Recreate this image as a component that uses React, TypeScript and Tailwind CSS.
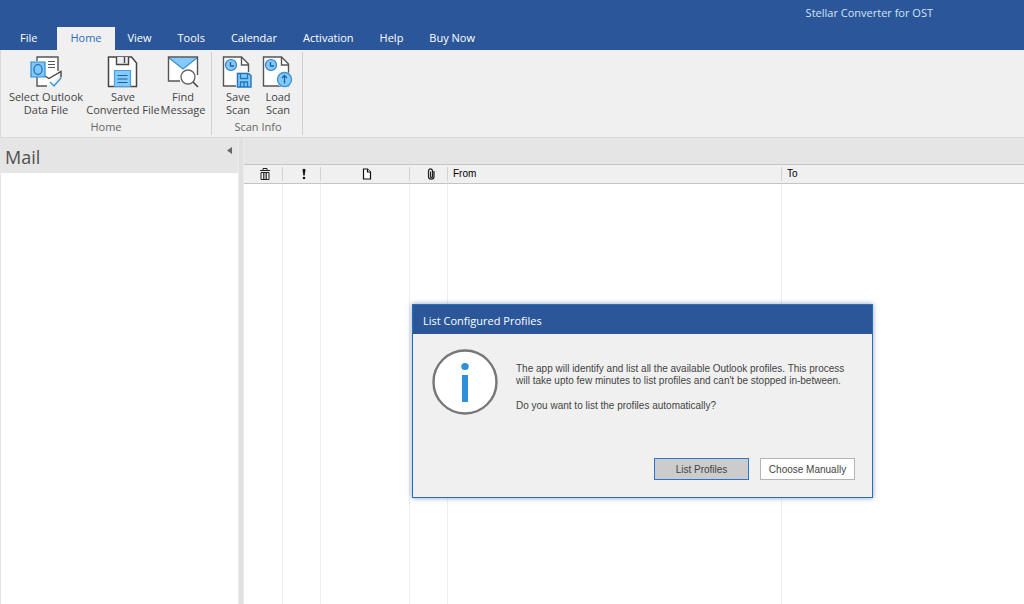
import type { ReactNode } from "react";
import clsx from "clsx";

const tabs = ["File", "Home", "View", "Tools", "Calendar", "Activation", "Help", "Buy Now"];

function ClockBadge() {
  return (
    <>
      <circle cx="9" cy="10" r="5.5" fill="#83caff" stroke="#2b7cc0" strokeWidth="1.2" />
      <path d="M8.5 7v4H12" fill="none" stroke="#1b639f" strokeWidth="1.3" />
    </>
  );
}

function PageOutline() {
  return (
    <>
      <path d="M1.5 2h18l7 7v22h-25z" fill="#fff" stroke="#555" strokeWidth="1.4" />
      <path d="M19.5 2v8h7" fill="none" stroke="#555" strokeWidth="1.4" />
    </>
  );
}

function OutlookFileIcon() {
  return (
    <svg className="h-[33px] w-8" viewBox="0 0 32 33" fill="none" aria-hidden="true">
      <path d="M7 2h21v19l-9 10H7z" fill="#fff" />
      <path d="M7 6V2h21v14M7 22v9h10" stroke="#555" strokeWidth="1.4" />
      <path d="M15 21l4 2.500 12-7v6" stroke="#444" strokeWidth="1.4" />
      <path d="M18 6.5h7M18 9.5h7M18 12.5h7" stroke="#555" strokeWidth="1.2" />
      <path d="M1 7h14v15H1z" fill="#83c8fa" stroke="#2d8bd0" strokeWidth="1.2" />
      <ellipse cx="8" cy="14.5" rx="4" ry="5" stroke="#2579bb" strokeWidth="1.3" />
      <path d="M20 27l4 4 7-8" stroke="#3d96dc" strokeWidth="1.5" />
    </svg>
  );
}

function FloppyIcon() {
  return (
    <svg className="h-[33px] w-8" viewBox="0 0 32 33" fill="none" aria-hidden="true">
      <path d="M1.5 2h23l5 6v23.5h-28z" fill="#fff" stroke="#444" strokeWidth="1.5" />
      <path d="M9.500 2v7.500h12V2" fill="#eee" stroke="#444" strokeWidth="1.4" />
      <path d="M17.500 2v6" stroke="#444" strokeWidth="1.4" />
      <path d="M7.500 31.500v-16h16v16z" fill="#83caff" stroke="#48a0e4" strokeWidth="1.2" />
      <path d="M10.500 20.500h10M10.500 24h10M10.500 27.500h10" stroke="#215f93" strokeWidth="1.2" />
    </svg>
  );
}

function FindIcon() {
  return (
    <svg className="h-[33px] w-8" viewBox="0 0 32 33" fill="none" aria-hidden="true">
      <path d="M1.500 2h29v24h-29z" fill="#fff" />
      <path d="M2 2.500h28L16 14z" fill="#83caff" />
      <path d="M1.500 2.500L16 14 30.500 2.500" stroke="#3f8dcb" strokeWidth="1.2" />
      <path d="M13 26H1.500V2h29v18" stroke="#555" strokeWidth="1.4" />
      <circle cx="21" cy="22" r="7" fill="#fff" stroke="#666" strokeWidth="1.4" />
      <path d="M26 27l5 5" stroke="#444" strokeWidth="1.6" />
    </svg>
  );
}

function SaveScanIcon() {
  return (
    <svg className="h-[33px] w-8" viewBox="0 0 32 33" fill="none" aria-hidden="true">
      <PageOutline />
      <ClockBadge />
      <path d="M14 17h15v16H14z" fill="#f0f0f0" />
      <path d="M15.500 18.500h11l2.500 2V32H15.500z" fill="#83caff" stroke="#2277b9" strokeWidth="1.4" />
      <path d="M18.500 18.500v5h7v-5M18.500 32v-5h7v5M22 27.500V32" stroke="#2277b9" strokeWidth="1.4" />
    </svg>
  );
}

function LoadScanIcon() {
  return (
    <svg className="h-[33px] w-8" viewBox="0 0 32 33" fill="none" aria-hidden="true">
      <PageOutline />
      <ClockBadge />
      <circle cx="22.500" cy="24.500" r="8" fill="#f0f0f0" />
      <circle cx="22.500" cy="24.500" r="7" fill="#83caff" stroke="#3c93d6" strokeWidth="1.4" />
      <path d="M22.500 28.500v-8M20 23l2.500-2.500L25 23" stroke="#1b639f" strokeWidth="1.3" />
    </svg>
  );
}

function RibbonButton({ icon, lines, className }: { icon: ReactNode; lines: [string, string]; className: string }) {
  return (
    <button type="button" className={clsx("flex flex-col items-center whitespace-nowrap", className)}>
      {icon}
      <span className="mt-0.5 leading-[13px]">
        {lines[0]}
        <br />
        {lines[1]}
      </span>
    </button>
  );
}

function RibbonGroup({ title, className, children }: { title: string; className?: string; children: ReactNode }) {
  return (
    <section className={clsx("my-0.5 flex flex-col border-r border-[#d0d0d0]", className)}>
      <div className="flex pt-[3px]">{children}</div>
      <h2 className="mt-1 text-center leading-[14px] text-[#666]">{title}</h2>
    </section>
  );
}

function TrashIcon() {
  return (
    <svg className="mx-auto h-3 w-3" viewBox="0 0 12 12" fill="none" stroke="#222" aria-hidden="true">
      <path d="M1 2.500h10M4 2V.5h4V2M2 4.500v7h8v-7z" />
      <path d="M4.500 5v6M6 5v6M7.500 5v6" strokeWidth=".8" />
    </svg>
  );
}

function ImportanceIcon() {
  return (
    <svg className="mx-auto h-3 w-3" viewBox="0 0 12 12" fill="#111" aria-hidden="true">
      <path d="M4.500 1.500Q6 0 7.500 1.500L6.700 7.500H5.300z" />
      <circle cx="6" cy="10" r="1.300" />
    </svg>
  );
}

function DocumentIcon() {
  return (
    <svg className="mx-auto h-3 w-3" viewBox="0 0 12 12" fill="#fff" stroke="#111" strokeWidth="1.200" aria-hidden="true">
      <path d="M2.500 1h4l3 3v7h-7z" />
      <path d="M6.500 1v3h3" />
    </svg>
  );
}

function ClipIcon() {
  return (
    <svg className="ml-auto mr-[10px] h-3 w-3" viewBox="0 0 12 12" fill="none" stroke="#222" strokeWidth="1.200" aria-hidden="true">
      <path d="M5.500 3.500v5c0 1.200 2 1.200 2 0V3c0-2.800-4-2.800-4 0v5.500c0 3.600 5.500 3.600 5.500 0V3" />
    </svg>
  );
}

function MessageList() {
  const head = "border-y border-[#c4c4c4] p-0 font-normal";
  const divider = "border-r border-[#d2d2d2]";
  const cell = "border-r border-[#eeeeee]";
  return (
    <table className="h-full w-full table-fixed border-separate border-spacing-0 text-left font-['Liberation_Sans',sans-serif] text-[10px] text-black">
      <colgroup>
        <col className="w-[39px]" />
        <col className="w-[38px]" />
        <col className="w-[89px]" />
        <col className="w-[38px]" />
        <col className="w-[334px]" />
        <col />
      </colgroup>
      <thead className="bg-[#f0f0f0]">
        <tr className="h-5">
          {[
            { label: "Deleted", icon: <TrashIcon /> },
            { label: "Importance", icon: <ImportanceIcon /> },
            { label: "Item type", icon: <DocumentIcon /> },
            { label: "Attachment", icon: <ClipIcon /> },
          ].map((c) => (
            <th key={c.label} scope="col" aria-label={c.label} className={head}>
              <div className={clsx("flex h-[14px] items-center pl-1", divider)}>{c.icon}</div>
            </th>
          ))}
          <th scope="col" className={head}>
            <div className={clsx("h-[14px] pl-[5px] leading-[14px]", divider)}>From</div>
          </th>
          <th scope="col" className={head}>
            <div className="h-[14px] pl-[5px] leading-[14px]">To</div>
          </th>
        </tr>
      </thead>
      <tbody>
        <tr>
          <td className={cell} />
          <td className={cell} />
          <td className={cell} />
          <td className={cell} />
          <td className={cell} />
          <td />
        </tr>
      </tbody>
    </table>
  );
}

function ProfilesDialog() {
  return (
    <div
      role="dialog"
      aria-labelledby="profiles-title"
      className="absolute left-[412px] top-[304px] w-[461px] border border-[#2e6db4] bg-[#f0f0f0] font-['Liberation_Sans',sans-serif] text-[10px] text-[#444] shadow-[0_0_5px_rgba(60,100,160,0.6)]"
    >
      <h2
        id="profiles-title"
        className="flex h-[29px] items-center bg-[#2b579a] px-[10px] pt-1 font-['Open_Sans',sans-serif] text-[11px] text-white"
      >
        List Configured Profiles
      </h2>
      <div className="flex items-start gap-[18px] pl-[19px] pr-4 pt-[15px]">
        <svg className="h-[66px] w-[66px] shrink-0" viewBox="0 0 66 66" aria-hidden="true">
          <circle cx="33" cy="33" r="31.500" fill="#fff" stroke="#777" strokeWidth="2.400" />
          <ellipse cx="33" cy="17.500" rx="3.700" ry="3.500" fill="#2f8fd8" />
          <path d="M30 26h6v27h-6z" fill="#2f8fd8" />
        </svg>
        <div className="whitespace-nowrap pt-[14px] leading-3">
          <p>
            The app will identify and list all the available Outlook profiles. This process
            <br />
            will take upto few minutes to list profiles and can't be stopped in-between.
          </p>
          <p className="mt-[13px]">Do you want to list the profiles automatically?</p>
        </div>
      </div>
      <div className="mt-[43px] flex justify-end gap-[11px] pb-[17px] pr-[17px]">
        <button type="button" className="h-[22px] w-[95px] border border-[#2e75c8] bg-[#cccccc]">
          List Profiles
        </button>
        <button type="button" className="h-[22px] w-[95px] border border-[#b4b4b4] bg-white">
          Choose Manually
        </button>
      </div>
    </div>
  );
}

export default function App() {
  return (
    <div className="relative flex h-screen flex-col overflow-hidden bg-[#e5e5e5] font-['Open_Sans',sans-serif] text-[11px] text-[#444]">
      <header className="bg-[#2b579a] text-white">
        <h1 className="flex h-[27px] items-center justify-end pr-[91px] text-[11px] text-[#d5e2f5]">
          Stellar Converter for OST
        </h1>
        <nav className="flex h-[23px]">
          {tabs.map((t) => (
            <button
              key={t}
              type="button"
              className={clsx(
                t === "File" ? "px-5" : "px-[13px]",
                t === "Home" && "bg-[#f0f0f0] text-[#2a6bc4]",
              )}
            >
              {t}
            </button>
          ))}
        </nav>
      </header>

      <div className="flex h-[88px] border-b border-l border-[#d9d9d9] bg-[#f0f0f0]">
        <RibbonGroup title="Home" className="w-[211px]">
          <RibbonButton className="w-[90px]" icon={<OutlookFileIcon />} lines={["Select Outlook", "Data File"]} />
          <RibbonButton className="w-16" icon={<FloppyIcon />} lines={["Save", "Converted File"]} />
          <RibbonButton className="w-14" icon={<FindIcon />} lines={["Find", "Message"]} />
        </RibbonGroup>
        <RibbonGroup title="Scan Info" className="w-[91px] pl-[6px] pr-1">
          <RibbonButton className="w-10" icon={<SaveScanIcon />} lines={["Save", "Scan"]} />
          <RibbonButton className="w-10" icon={<LoadScanIcon />} lines={["Load", "Scan"]} />
        </RibbonGroup>
      </div>

      <main className="flex min-h-0 flex-1">
        <aside className="flex w-[238px] shrink-0 flex-col">
          <div className="flex h-[35px] justify-between pl-[5px] pr-[6px]">
            <h2 className="pt-[5px] text-[18px] leading-7 text-[#505050]">Mail</h2>
            <button type="button" aria-label="Collapse mail pane" className="h-[25px]">
              <svg className="h-[7px] w-[5px]" viewBox="0 0 5 7" fill="#666" aria-hidden="true">
                <path d="M5 0v7L0 3.500z" />
              </svg>
            </button>
          </div>
          <div className="ml-px flex-1 bg-white" />
        </aside>
        <div className="w-1.5 shrink-0 border-x border-[#ececec] bg-[#e0e0e0]" />
        <section className="flex min-w-0 flex-1 flex-col">
          <div className="h-[26px] shrink-0" />
          <div className="min-h-0 flex-1 bg-white">
            <MessageList />
          </div>
        </section>
      </main>

      <ProfilesDialog />
    </div>
  );
}
